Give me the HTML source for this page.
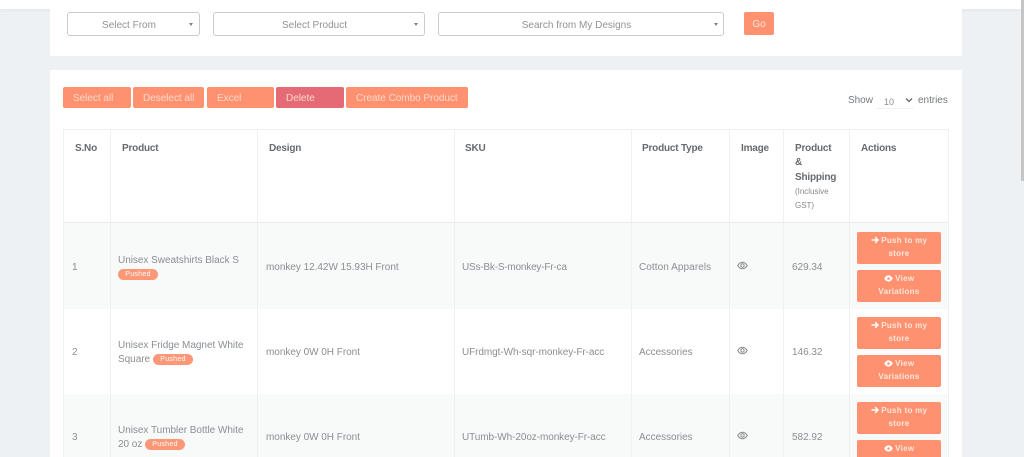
<!DOCTYPE html>
<html><head><meta charset="utf-8"><style>
html,body{margin:0;padding:0;width:1024px;height:457px;overflow:hidden;background:#edf1f4;font-family:"Liberation Sans",sans-serif}
#w{position:relative;width:1024px;height:457px;overflow:hidden;background:#edf1f4;filter:blur(.3px)}
.a,.t,.b{position:absolute;box-sizing:border-box}
.t{white-space:nowrap;font-size:10px;line-height:14px;color:#8a8f93;letter-spacing:-.03px;margin-top:4px}
.h{font-weight:bold;color:#666b6f;letter-spacing:-.2px}
.s{height:24px;top:12px;background:#fff;border:1px solid #c9cccf;border-radius:3px;font-size:10px;line-height:26px;color:#8f9396;text-align:center;padding-right:9px}
.s i{position:absolute;top:10px;width:0;height:0;border-left:2.5px solid transparent;border-right:2.5px solid transparent;border-top:3.5px solid #808080}
.b{top:87px;height:21px;background:#fe9270;border-radius:2px;color:#ffd9cb;font-size:10px;line-height:21px;padding:1px 0 0 10px;white-space:nowrap;letter-spacing:-.03px}
.v{background:#eef0f2;width:1px}
.p{background:#fe9270;border-radius:7px;height:11px;width:40px;color:#fff;opacity:.95;font-size:7px;line-height:11px;text-align:center;letter-spacing:.3px}
.ab{left:857px;width:84px;height:32px;background:#fe9270;border-radius:2px;color:#ffe6dc;font-size:8px;line-height:12.6px;text-align:center;padding-top:3px;letter-spacing:.3px;font-weight:bold}
.ab svg{vertical-align:-1px}
</style></head><body><div id="w">
<div class="a" style="left:0;top:0;width:1021px;height:9px;background:#fff;box-shadow:0 1px 4px rgba(0,0,0,.05)"></div>
<div class="a" style="left:1021px;top:0;width:3px;height:181px;background:#c4c6c6"></div>
<div class="a" style="left:50px;top:9px;width:912px;height:47px;background:#fff"></div>
<div class="a" style="left:50px;top:70px;width:912px;height:387px;background:#fff"></div>

<div class="a s" style="left:67px;width:133px">Select From<i style="left:121px"></i></div>
<div class="a s" style="left:213px;width:212px">Select Product<i style="left:200px"></i></div>
<div class="a s" style="left:438px;width:286px">Search from My Designs<i style="left:275px"></i></div>
<div class="a" style="left:744px;top:12px;width:30px;height:23px;background:#fe9270;border-radius:2px;color:#ffe6dc;font-size:10px;line-height:26px;text-align:center">Go</div>

<div class="b" style="left:63px;width:68px">Select all</div>
<div class="b" style="left:133px;width:71px">Deselect all</div>
<div class="b" style="left:207px;width:67px">Excel</div>
<div class="b" style="left:276px;width:68px;background:#e56a76">Delete</div>
<div class="b" style="left:346px;width:122px">Create Combo Product</div>

<div class="t" style="left:848px;top:90px;color:#74787b">Show</div>
<div class="t" style="left:884px;top:91px;font-size:9px">10</div>
<svg class="a" style="left:905px;top:97px" width="8" height="6" viewBox="0 0 8 6"><path d="M1 1.500 4 4.500 7 1.500" fill="none" stroke="#666" stroke-width="1.300"/></svg>
<div class="a" style="left:876px;top:108px;width:38px;height:1px;background:#f1f2f3"></div>
<div class="t" style="left:918px;top:90px;color:#74787b">entries</div>

<div class="a" style="left:63px;top:223px;width:886px;height:86px;background:#f8f9f9"></div>
<div class="a" style="left:63px;top:394px;width:886px;height:63px;background:#f8f9f9"></div>
<div class="a" style="left:63px;top:129px;width:886px;height:1px;background:#eef0f2"></div>
<div class="a" style="left:63px;top:222px;width:886px;height:1px;background:#e9ebed"></div>
<div class="a v" style="left:63px;top:129px;height:328px"></div>
<div class="a v" style="left:110px;top:129px;height:328px"></div>
<div class="a v" style="left:257px;top:129px;height:328px"></div>
<div class="a v" style="left:454px;top:129px;height:328px"></div>
<div class="a v" style="left:631px;top:129px;height:328px"></div>
<div class="a v" style="left:729px;top:129px;height:328px"></div>
<div class="a v" style="left:783px;top:129px;height:328px"></div>
<div class="a v" style="left:849px;top:129px;height:328px"></div>
<div class="a v" style="left:948px;top:129px;height:328px"></div>

<div class="t h" style="left:75px;top:138px">S.No</div>
<div class="t h" style="left:122px;top:138px">Product</div>
<div class="t h" style="left:269px;top:138px">Design</div>
<div class="t h" style="left:465px;top:138px">SKU</div>
<div class="t h" style="left:642px;top:138px">Product Type</div>
<div class="t h" style="left:741px;top:138px">Image</div>
<div class="t h" style="left:795px;top:138px">Product</div>
<div class="t h" style="left:795px;top:152px">&amp;</div>
<div class="t h" style="left:795px;top:167px">Shipping</div>
<div class="t" style="left:795px;top:181px;font-size:8px;color:#85898c">(Inclusive</div>
<div class="t" style="left:795px;top:195px;font-size:8px;color:#85898c">GST)</div>
<div class="t h" style="left:861px;top:138px">Actions</div>

<div class="t" style="left:72px;top:257px">1</div>
<div class="t" style="left:118px;top:250px">Unisex Sweatshirts Black S</div>
<div class="a p" style="left:118px;top:269px">Pushed</div>
<div class="t" style="left:266px;top:257px">monkey 12.42W 15.93H Front</div>
<div class="t" style="left:462px;top:257px;letter-spacing:-.2px">USs-Bk-S-monkey-Fr-ca</div>
<div class="t" style="left:639px;top:257px;letter-spacing:.07px">Cotton Apparels</div>
<div class="t" style="left:792px;top:257px">629.34</div>

<div class="t" style="left:72px;top:342px">2</div>
<div class="t" style="left:118px;top:335px">Unisex Fridge Magnet White</div>
<div class="t" style="left:118px;top:349px">Square</div>
<div class="a p" style="left:153px;top:354px">Pushed</div>
<div class="t" style="left:266px;top:342px">monkey 0W 0H Front</div>
<div class="t" style="left:462px;top:342px;letter-spacing:-.08px">UFrdmgt-Wh-sqr-monkey-Fr-acc</div>
<div class="t" style="left:639px;top:342px">Accessories</div>
<div class="t" style="left:792px;top:342px">146.32</div>

<div class="t" style="left:72px;top:427px">3</div>
<div class="t" style="left:118px;top:420px">Unisex Tumbler Bottle White</div>
<div class="t" style="left:118px;top:434px">20 oz</div>
<div class="a p" style="left:145px;top:439px">Pushed</div>
<div class="t" style="left:266px;top:427px">monkey 0W 0H Front</div>
<div class="t" style="left:462px;top:427px;letter-spacing:-.08px">UTumb-Wh-20oz-monkey-Fr-acc</div>
<div class="t" style="left:639px;top:427px">Accessories</div>
<div class="t" style="left:792px;top:427px">582.92</div>

<svg class="a" style="left:737px;top:261px" width="11" height="9" viewBox="0 0 11 9"><path d="M.7 4.500C2 2.400 3.600 1.200 5.500 1.200S9 2.400 10.300 4.500C9 6.600 7.400 7.800 5.500 7.800S2 6.600.7 4.500Z" fill="none" stroke="#85898c"/><circle cx="5.500" cy="4.500" r="1.700" fill="none" stroke="#85898c"/></svg>
<svg class="a" style="left:737px;top:346px" width="11" height="9" viewBox="0 0 11 9"><path d="M.7 4.500C2 2.400 3.600 1.200 5.500 1.200S9 2.400 10.300 4.500C9 6.600 7.400 7.800 5.500 7.800S2 6.600.7 4.500Z" fill="none" stroke="#85898c"/><circle cx="5.500" cy="4.500" r="1.700" fill="none" stroke="#85898c"/></svg>
<svg class="a" style="left:737px;top:431px" width="11" height="9" viewBox="0 0 11 9"><path d="M.7 4.500C2 2.400 3.600 1.200 5.500 1.200S9 2.400 10.300 4.500C9 6.600 7.400 7.800 5.500 7.800S2 6.600.7 4.500Z" fill="none" stroke="#85898c"/><circle cx="5.500" cy="4.500" r="1.700" fill="none" stroke="#85898c"/></svg>

<div class="a ab" style="top:232px"><svg width="8" height="8" viewBox="0 0 8 8"><path d="M.5 4H7M4.200 1.200 7 4 4.200 6.800" fill="none" stroke="#fff" stroke-width="1.500"/></svg> Push to my<br>store</div>
<div class="a ab" style="top:270px"><svg width="9" height="7" viewBox="0 0 9 7"><path d="M.2 3.500C1.500 1.300 3 .4 4.500 .4S7.500 1.300 8.800 3.500C7.500 5.700 6 6.600 4.500 6.600S1.500 5.700.2 3.500Z" fill="#fff"/><circle cx="4.500" cy="3.500" r="1.300" fill="#fe9270"/></svg> View<br>Variations</div>
<div class="a ab" style="top:317px"><svg width="8" height="8" viewBox="0 0 8 8"><path d="M.5 4H7M4.200 1.200 7 4 4.200 6.800" fill="none" stroke="#fff" stroke-width="1.500"/></svg> Push to my<br>store</div>
<div class="a ab" style="top:355px"><svg width="9" height="7" viewBox="0 0 9 7"><path d="M.2 3.500C1.500 1.300 3 .4 4.500 .4S7.500 1.300 8.800 3.500C7.500 5.700 6 6.600 4.500 6.600S1.500 5.700.2 3.500Z" fill="#fff"/><circle cx="4.500" cy="3.500" r="1.300" fill="#fe9270"/></svg> View<br>Variations</div>
<div class="a ab" style="top:402px"><svg width="8" height="8" viewBox="0 0 8 8"><path d="M.5 4H7M4.200 1.200 7 4 4.200 6.800" fill="none" stroke="#fff" stroke-width="1.500"/></svg> Push to my<br>store</div>
<div class="a ab" style="top:440px"><svg width="9" height="7" viewBox="0 0 9 7"><path d="M.2 3.500C1.500 1.300 3 .4 4.500 .4S7.500 1.300 8.800 3.500C7.500 5.700 6 6.600 4.500 6.600S1.500 5.700.2 3.500Z" fill="#fff"/><circle cx="4.500" cy="3.500" r="1.300" fill="#fe9270"/></svg> View<br>Variations</div>
</div></body></html>
